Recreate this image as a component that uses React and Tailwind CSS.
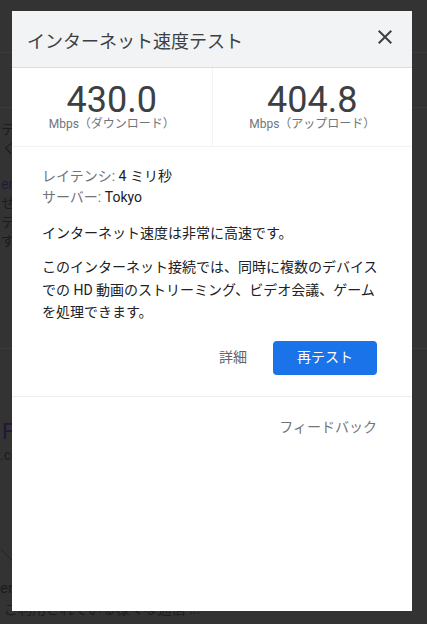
import React from "react";

const font = { fontFamily: 'Roboto, "Noto Sans CJK JP", sans-serif' };

function CloseIcon() {
  return (
    <svg width="24" height="24" viewBox="0 0 24 24" fill="#3c4043">
      <path d="M19 6.41L17.59 5 12 10.59 6.41 5 5 6.41 10.59 12 5 17.59 6.41 19 12 13.41 17.59 19 19 17.59 13.41 12z" />
    </svg>
  );
}

function Speed({ value, label, divider }) {
  return (
    <div
      className={
        "flex-1 flex flex-col items-center pt-[15px] " +
        (divider ? "border-r border-[#f1f3f4]" : "")
      }
    >
      <div className="text-[36px] leading-[34px] text-[#3c4043]">{value}</div>
      <div className="text-[12px] leading-[14px] text-[#70757a]">{label}</div>
    </div>
  );
}

// dimmed page behind the dialog, only a strip of it shows at the left edge
function BackPage() {
  return (
    <div className="h-full w-full flex flex-col bg-[#333333] text-[14px] text-[#1c1c1c]">
      <div className="h-[53px] border-b border-[#3b3b3b]" />
      <div className="h-[55px] border-b border-[#3b3b3b]" />
      <div className="pt-[12px] pl-[1px] flex flex-col leading-[19px]">
        <div>テスト</div>
        <div className="italic">くの</div>
        <div className="h-[17px]" />
        <div className="text-[#1d1d3a]">er</div>
        <div>せて</div>
        <div>デス</div>
        <div>すか</div>
      </div>
      <div className="h-[98px] border-b border-[#3b3b3b]" />
      <div className="pt-[70px] pl-[2px] text-[22px] leading-[26px] text-[#24163a]">F</div>
      <div className="leading-[20px]">.co</div>
      <div className="h-[80px]" />
      <div className="leading-[20px] text-[#1d1d3a]">＼</div>
      <div className="h-[12px]" />
      <div className="text-[15px] leading-[22px]">er</div>
      <div className="pl-[4px] leading-[20px] whitespace-nowrap">ご利用されている様々な通信 ...</div>
    </div>
  );
}

export default function App() {
  return (
    <div className="relative w-[427px] h-[624px] overflow-hidden" style={font}>
      <BackPage />

      <div className="absolute left-[12px] top-[11px] w-[400px] h-[600px] bg-white flex flex-col">
        {/* header */}
        <div className="h-[57px] bg-[#f1f3f4] border-b border-[#dadce0] flex items-center justify-between pl-[15px] pr-[15px] pt-[6px]">
          <div className="text-[18px] leading-[24px] text-[#3c4043]">インターネット速度テスト</div>
          <button className="-mt-[11px]">
            <CloseIcon />
          </button>
        </div>

        {/* speeds */}
        <div className="h-[79px] flex border-b border-[#f1f3f4]">
          <Speed value="430.0" label="Mbps（ダウンロード）" divider />
          <Speed value="404.8" label="Mbps（アップロード）" />
        </div>

        {/* body */}
        <div className="pl-[30px] pr-[34px] pt-[19px] pb-[21px] border-b border-[#eeeeee] text-[14px] text-[#202124]">
          <div className="leading-[21px]">
            <div>
              <span className="text-[#70757a]">レイテンシ: </span>4 ミリ秒
            </div>
            <div>
              <span className="text-[#70757a]">サーバー: </span>Tokyo
            </div>
          </div>
          <p className="mt-[14px] leading-[22px]">インターネット速度は非常に高速です。</p>
          <p className="mt-[12px] leading-[22.5px] whitespace-nowrap">
            このインターネット接続では、同時に複数のデバイス
            <br />
            での HD 動画のストリーミング、ビデオ会議、ゲーム
            <br />
            を処理できます。
          </p>
          <div className="mt-[17px] pr-[1px] flex justify-end items-center gap-[26px]">
            <button className="text-[14px] text-[#5f6368]">詳細</button>
            <button className="w-[104px] h-[34px] rounded-[4px] bg-[#1a73e8] text-white text-[14px]">
              再テスト
            </button>
          </div>
        </div>

        {/* footer */}
        <div className="pt-[20px] pr-[35px] flex justify-end">
          <span className="text-[14px] leading-[20px] text-[#70757a]">フィードバック</span>
        </div>
      </div>
    </div>
  );
}
